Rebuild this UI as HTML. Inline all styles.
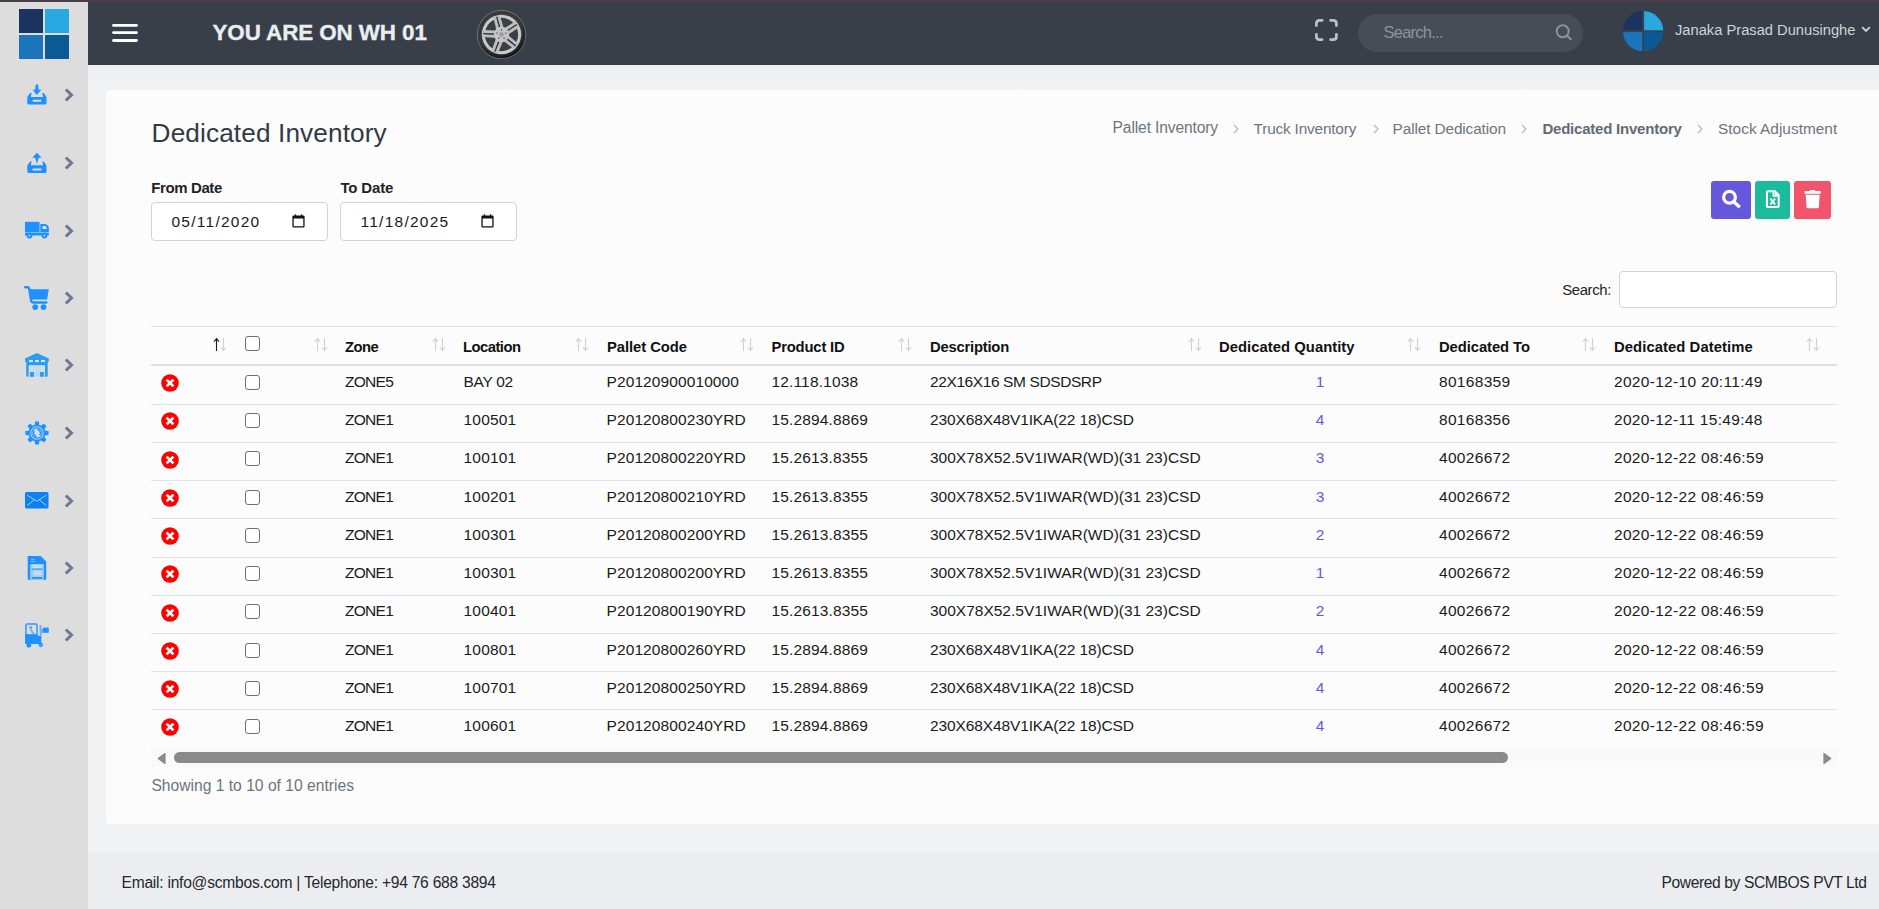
<!DOCTYPE html>
<html><head><meta charset="utf-8"><title>Dedicated Inventory</title>
<style>
html,body{margin:0;padding:0}
body{width:1879px;height:909px;overflow:hidden;position:relative;background:#f0f1f4;font-family:"Liberation Sans",sans-serif}
.a{position:absolute;box-sizing:border-box}
svg.a{overflow:visible}
.t{position:absolute;white-space:nowrap;line-height:1}
</style></head><body>
<div class="a" style="left:0;top:0;width:1879px;height:2px;background:#4b3e48"></div>
<div class="a" style="left:0;top:2px;width:88px;height:907px;background:#dddddd"></div>
<div class="a" style="left:88px;top:2px;width:1791px;height:63px;background:#383f49"></div>
<div class="a" style="left:88px;top:65px;width:1791px;height:787px;background:linear-gradient(#eeeff2,#f1f2f4 25px,#f1f2f4)"></div>
<div class="a" style="left:88px;top:852px;width:1791px;height:57px;background:#ecedf1"></div>
<div class="a" style="left:106px;top:90px;width:1790px;height:734px;background:#fcfcfd;border-radius:4px"></div>
<div class="a" style="left:19px;top:9px;width:24px;height:24px;background:#1b335f"></div>
<div class="a" style="left:45px;top:9px;width:24px;height:24px;background:#27a8e0"></div>
<div class="a" style="left:19px;top:35px;width:24px;height:24px;background:#1c75bc"></div>
<div class="a" style="left:45px;top:35px;width:24px;height:24px;background:#0b5a96"></div>
<svg class="a" style="left:63.5px;top:88px" width="10" height="14" viewBox="0 0 10 14"><path d="M1.8 1.5 L7.5 7 L1.8 12.5" fill="none" stroke="#6e7891" stroke-width="3.1"/></svg>
<svg class="a" style="left:63.5px;top:156px" width="10" height="14" viewBox="0 0 10 14"><path d="M1.8 1.5 L7.5 7 L1.8 12.5" fill="none" stroke="#6e7891" stroke-width="3.1"/></svg>
<svg class="a" style="left:63.5px;top:224px" width="10" height="14" viewBox="0 0 10 14"><path d="M1.8 1.5 L7.5 7 L1.8 12.5" fill="none" stroke="#6e7891" stroke-width="3.1"/></svg>
<svg class="a" style="left:63.5px;top:291px" width="10" height="14" viewBox="0 0 10 14"><path d="M1.8 1.5 L7.5 7 L1.8 12.5" fill="none" stroke="#6e7891" stroke-width="3.1"/></svg>
<svg class="a" style="left:63.5px;top:358px" width="10" height="14" viewBox="0 0 10 14"><path d="M1.8 1.5 L7.5 7 L1.8 12.5" fill="none" stroke="#6e7891" stroke-width="3.1"/></svg>
<svg class="a" style="left:63.5px;top:426px" width="10" height="14" viewBox="0 0 10 14"><path d="M1.8 1.5 L7.5 7 L1.8 12.5" fill="none" stroke="#6e7891" stroke-width="3.1"/></svg>
<svg class="a" style="left:63.5px;top:494px" width="10" height="14" viewBox="0 0 10 14"><path d="M1.8 1.5 L7.5 7 L1.8 12.5" fill="none" stroke="#6e7891" stroke-width="3.1"/></svg>
<svg class="a" style="left:63.5px;top:561px" width="10" height="14" viewBox="0 0 10 14"><path d="M1.8 1.5 L7.5 7 L1.8 12.5" fill="none" stroke="#6e7891" stroke-width="3.1"/></svg>
<svg class="a" style="left:63.5px;top:628px" width="10" height="14" viewBox="0 0 10 14"><path d="M1.8 1.5 L7.5 7 L1.8 12.5" fill="none" stroke="#6e7891" stroke-width="3.1"/></svg>
<svg class="a" style="left:27px;top:84px" width="20" height="21" viewBox="0 0 20 21"><path d="M9.9 0.2 Q10.9 0.2 11.1 1 L11.7 5.8 H14.3 L9.9 11 L5.5 5.8 H8.1 L8.7 1 Q8.9 0.2 9.9 0.2z" fill="#1e90ff"/><path d="M0.3 13 L3.1 9.1 H4.6 L3.8 12.9 H16.1 L15.3 9.1 H16.8 L19.5 13 V19 Q19.5 20.6 17.9 20.6 H1.9 Q0.3 20.6 0.3 19z M5.7 15.8 h8.5 v1.9 h-8.5z" fill="#1e90ff" fill-rule="evenodd"/></svg>
<svg class="a" style="left:27px;top:152px" width="20" height="21" viewBox="0 0 20 21"><path d="M9.9 0.8 L14.4 5.4 Q14.6 5.8 14.2 5.8 H11.7 L9.9 11.8 L8.1 5.8 H5.6 Q5.2 5.8 5.4 5.4z" fill="#1e90ff"/><path d="M0.3 13.4 L3.1 9.5 H4.6 L3.8 13.3 H16.1 L15.3 9.5 H16.8 L19.5 13.4 V19.4 Q19.5 21 17.9 21 H1.9 Q0.3 21 0.3 19.4z M5.5 16.6 h8.9 v1.9 h-8.9z" fill="#1e90ff" fill-rule="evenodd"/></svg>
<svg class="a" style="left:25px;top:221px" width="24" height="18" viewBox="0 0 24 18"><rect x="0" y="0.8" width="14.6" height="10.3" fill="#1e90ff"/><path d="M15.3 2.9 H20 Q22.6 2.9 23.8 6.6 V11.1 H15.3z" fill="#1e90ff"/><path d="M17.6 5 H20 Q21.3 5 21.8 7.9 H17.6z" fill="#e3e6ea"/><rect x="0" y="11.6" width="23.8" height="2.9" fill="#1e90ff"/><circle cx="4.5" cy="14.5" r="2.9" fill="#1e90ff"/><circle cx="19.4" cy="14.5" r="2.9" fill="#1e90ff"/><circle cx="4.5" cy="14.6" r="0.9" fill="#cfe3f7"/><circle cx="19.4" cy="14.6" r="0.9" fill="#cfe3f7"/></svg>
<svg class="a" style="left:25px;top:286px" width="24" height="24" viewBox="0 0 24 24"><path d="M0.2 1.3 H2.6 Q3.9 1.3 4.2 2.8 L6.2 14.6 Q6.5 16.5 8.3 16.5 H21.3" fill="none" stroke="#1e90ff" stroke-width="2.5" stroke-linecap="round"/><path d="M4.3 3.2 H23.8 L22.1 13.5 H6z" fill="#1e90ff"/><circle cx="10.2" cy="21.1" r="2.9" fill="#1e90ff"/><circle cx="18.5" cy="21.1" r="2.9" fill="#1e90ff"/></svg>
<svg class="a" style="left:25px;top:353px" width="24" height="24" viewBox="0 0 24 24"><path d="M11.9 0 L23.8 5.6 V8.6 L22.7 9.3 V23 Q22.7 23.8 21.8 23.8 H20 V12.3 H3.8 V23.8 H2.2 Q1.2 23.8 1.2 23 V9.3 L0 8.6 V5.6z" fill="#2a9cf2"/><rect x="4" y="7.1" width="3.9" height="1.9" fill="#e4ecf3"/><rect x="10" y="7.1" width="3.8" height="1.9" fill="#e4ecf3"/><rect x="16" y="7.1" width="3.9" height="1.9" fill="#e4ecf3"/><rect x="3.8" y="12.6" width="16.2" height="11.2" fill="#cfdff0"/><rect x="5" y="19" width="4" height="4.8" fill="#2a9cf2"/><rect x="14.9" y="19" width="4" height="4.8" fill="#2a9cf2"/><rect x="9.8" y="19" width="4.2" height="4.8" fill="#bcd6f0"/><rect x="7.8" y="14" width="7.6" height="4.4" fill="#c2d9f0"/></svg>
<svg class="a" style="left:25px;top:421px" width="24" height="24" viewBox="0 0 24 24"><path d="M9.7 5 L10.1 0.4 H13.9 L14.3 5z" fill="#1e90ff" transform="rotate(0 12 12)"/><path d="M9.7 5 L10.1 0.4 H13.9 L14.3 5z" fill="#1e90ff" transform="rotate(45 12 12)"/><path d="M9.7 5 L10.1 0.4 H13.9 L14.3 5z" fill="#1e90ff" transform="rotate(90 12 12)"/><path d="M9.7 5 L10.1 0.4 H13.9 L14.3 5z" fill="#1e90ff" transform="rotate(135 12 12)"/><path d="M9.7 5 L10.1 0.4 H13.9 L14.3 5z" fill="#1e90ff" transform="rotate(180 12 12)"/><path d="M9.7 5 L10.1 0.4 H13.9 L14.3 5z" fill="#1e90ff" transform="rotate(225 12 12)"/><path d="M9.7 5 L10.1 0.4 H13.9 L14.3 5z" fill="#1e90ff" transform="rotate(270 12 12)"/><path d="M9.7 5 L10.1 0.4 H13.9 L14.3 5z" fill="#1e90ff" transform="rotate(315 12 12)"/><circle cx="12" cy="12" r="8.6" fill="#1e90ff"/><circle cx="12" cy="12" r="6.3" fill="none" stroke="#a9d3fb" stroke-width="1.1"/><circle cx="12" cy="12" r="4.6" fill="#cfe0f0"/><path d="M13.6 8.9 A3.4 3.4 0 0 1 14.6 14.2 M10.4 15.1 A3.4 3.4 0 0 1 9.4 9.8" fill="none" stroke="#1e90ff" stroke-width="1.4"/><path d="M12.2 7.6 L14.6 8.2 L13.2 10.2z M11.8 16.4 L9.4 15.8 L10.8 13.8z" fill="#1e90ff"/></svg>
<svg class="a" style="left:25px;top:492px" width="24" height="17" viewBox="0 0 24 17"><rect x="0" y="0" width="23.5" height="16.5" rx="1.5" fill="#0d80f2"/><path d="M2.2 3.2 L11.8 9.2 L21.3 3.2 M2.2 13.5 L9 8 M21.3 13.5 L14.6 8" fill="none" stroke="#ffffff" stroke-width="0.7" opacity="0.9"/></svg>
<svg class="a" style="left:27px;top:556px" width="20" height="24" viewBox="0 0 20 24"><path d="M0.7 0 H13.8 L19.2 5.5 V23.8 H0.7z" fill="#1e90ff"/><rect x="3.2" y="8" width="13.6" height="15.8" rx="1.2" fill="#a3cef9"/><rect x="5.3" y="9.5" width="9.4" height="2.6" fill="#c6e1fb"/><rect x="4.6" y="12.6" width="11" height="1.1" fill="#1e90ff" opacity="0.85"/><rect x="6.4" y="14.6" width="8.2" height="4.6" fill="#c0dcf9"/><rect x="4.6" y="20.9" width="11.2" height="1.9" rx="0.9" fill="#1e90ff"/><rect x="4" y="3.2" width="3.6" height="0.9" fill="#8fc4fa"/><rect x="4" y="5" width="3.6" height="0.9" fill="#8fc4fa"/></svg>
<svg class="a" style="left:25px;top:623px" width="24" height="25" viewBox="0 0 24 25"><rect x="1" y="1" width="11" height="11.5" rx="1.8" fill="none" stroke="#1e90ff" stroke-width="2" opacity="0.7"/><circle cx="5.8" cy="4.6" r="1.3" fill="#1e90ff" opacity="0.8"/><path d="M4.6 6.2 H6.6 L10.4 11.4 H7.6z" fill="#1e90ff" opacity="0.55"/><path d="M0 11.3 H10.5 L16.3 13.8 V20.9 H0z" fill="#1e90ff"/><rect x="14.6" y="2" width="1.9" height="13" fill="#1e90ff" opacity="0.6"/><rect x="16.4" y="5.8" width="2" height="4.2" fill="#1e90ff" opacity="0.6"/><rect x="18" y="4.6" width="5.8" height="5.2" fill="#1e90ff"/><circle cx="3.8" cy="22.3" r="2.4" fill="#1e90ff"/><circle cx="15.8" cy="21.8" r="2.4" fill="#1e90ff" opacity="0.8"/></svg>
<svg class="a" style="left:112px;top:23px" width="27" height="20" viewBox="0 0 27 20"><rect x="0.1" y="1" width="25.8" height="2.8" rx="1.4" fill="#fff"/><rect x="0.1" y="8.2" width="25.8" height="2.8" rx="1.4" fill="#fff"/><rect x="0.1" y="16.1" width="25.8" height="2.8" rx="1.4" fill="#fff"/></svg>
<div class="t" style="left:212.5px;top:22.1px;font-size:22.4px;font-weight:bold;color:#ebedf0;letter-spacing:-0.082px;-webkit-text-stroke:0.35px #ebedf0">YOU ARE ON WH 01</div>
<svg class="a" style="left:477px;top:10px" width="49" height="49" viewBox="0 0 48 48"><defs><radialGradient id="tg" cx="0.45" cy="0.4" r="0.6"><stop offset="0.75" stop-color="#3a3a3a"/><stop offset="1" stop-color="#111"/></radialGradient></defs><circle cx="24" cy="24" r="23.7" fill="url(#tg)" stroke="#8e939b" stroke-width="0.6"/><circle cx="24" cy="24" r="19.3" fill="#c9c9c9"/><circle cx="24" cy="24" r="16.3" fill="#383f49"/><g transform="rotate(-15 24 24)"><path d="M20.2 24 L20.6 5.5 H27.4 L27.8 24z" fill="#bdbdbd"/><path d="M23.3 19 L23.4 6 H24.6 L24.7 19z" fill="#2b2f36"/></g><g transform="rotate(57 24 24)"><path d="M20.2 24 L20.6 5.5 H27.4 L27.8 24z" fill="#bdbdbd"/><path d="M23.3 19 L23.4 6 H24.6 L24.7 19z" fill="#2b2f36"/></g><g transform="rotate(129 24 24)"><path d="M20.2 24 L20.6 5.5 H27.4 L27.8 24z" fill="#bdbdbd"/><path d="M23.3 19 L23.4 6 H24.6 L24.7 19z" fill="#2b2f36"/></g><g transform="rotate(201 24 24)"><path d="M20.2 24 L20.6 5.5 H27.4 L27.8 24z" fill="#bdbdbd"/><path d="M23.3 19 L23.4 6 H24.6 L24.7 19z" fill="#2b2f36"/></g><g transform="rotate(273 24 24)"><path d="M20.2 24 L20.6 5.5 H27.4 L27.8 24z" fill="#bdbdbd"/><path d="M23.3 19 L23.4 6 H24.6 L24.7 19z" fill="#2b2f36"/></g><circle cx="24" cy="24" r="7.5" fill="#c4c4c4"/><circle cx="24" cy="24" r="2.2" fill="#9a9a9a"/><circle cx="24" cy="19.5" r="0.8" fill="#666"/><circle cx="28.3" cy="22.6" r="0.8" fill="#666"/><circle cx="26.6" cy="27.6" r="0.8" fill="#666"/><circle cx="21.4" cy="27.6" r="0.8" fill="#666"/><circle cx="19.7" cy="22.6" r="0.8" fill="#666"/></svg>
<svg class="a" style="left:1315px;top:19px" width="23" height="23" viewBox="0 0 23 23"><path d="M1.4 6.5 V4.5 Q1.4 1.4 4.5 1.4 H7.1 M15.6 1.4 H18.3 Q21.4 1.4 21.4 4.5 V6.5 M21.4 15.5 V17.5 Q21.4 20.6 18.3 20.6 H15.6 M7.1 20.6 H4.5 Q1.4 20.6 1.4 17.5 V15.5" fill="none" stroke="#bcbfc5" stroke-width="2.8" stroke-linecap="round"/></svg>
<div class="a" style="left:1358px;top:14px;width:225px;height:38px;border-radius:19px;background:#474d57"></div>
<div class="t" style="left:1383.5px;top:24.4px;font-size:16.5px;font-weight:normal;color:#8e939b;letter-spacing:-0.754px">Search...</div>
<svg class="a" style="left:1555px;top:24px" width="18" height="17" viewBox="0 0 18 17"><circle cx="7.7" cy="7.3" r="6" fill="none" stroke="#8c919a" stroke-width="2"/><path d="M12.2 11.8 L15.9 15.3" stroke="#8c919a" stroke-width="2" stroke-linecap="round"/></svg>
<svg class="a" style="left:1623px;top:10.7px" width="40.4" height="40.4" viewBox="0 0 40.4 40.4"><defs><clipPath id="cc"><circle cx="20.2" cy="20.2" r="20.2"/></clipPath></defs><g clip-path="url(#cc)"><rect x="0" y="0" width="20.2" height="20.2" fill="#1b335f"/><rect x="20.2" y="0" width="20.2" height="20.2" fill="#27a8e0"/><rect x="0" y="20.2" width="20.2" height="20.2" fill="#1c75bc"/><rect x="20.2" y="20.2" width="20.2" height="20.2" fill="#0b5a96"/><rect x="19.3" y="0" width="1.8" height="40.4" fill="#3c4149"/><rect x="0" y="19.3" width="40.4" height="1.8" fill="#3c4149"/></g></svg>
<div class="t" style="left:1675px;top:23.4px;font-size:14.7px;font-weight:normal;color:#d0d3d7;">Janaka Prasad Dunusinghe</div>
<svg class="a" style="left:1861px;top:26px" width="10" height="7" viewBox="0 0 10 7"><path d="M1.2 1.2 L5 5 L8.8 1.2" fill="none" stroke="#d0d3d7" stroke-width="1.9"/></svg>
<div class="t" style="left:151.6px;top:120.2px;font-size:26.2px;font-weight:normal;color:#323a46;letter-spacing:0.121px">Dedicated Inventory</div>
<div class="t" style="left:1112.6px;top:119.9px;font-size:15.6px;font-weight:normal;color:#6c757d;letter-spacing:-0.128px">Pallet Inventory</div>
<div class="t" style="left:1253.6px;top:120.9px;font-size:15.4px;font-weight:normal;color:#6c757d;letter-spacing:-0.197px">Truck Inventory</div>
<div class="t" style="left:1392.6px;top:120.9px;font-size:15.4px;font-weight:normal;color:#6c757d;letter-spacing:-0.129px">Pallet Dedication</div>
<div class="t" style="left:1542.4px;top:121.2px;font-size:15px;font-weight:bold;color:#626a73;letter-spacing:-0.215px">Dedicated Inventory</div>
<div class="t" style="left:1718px;top:120.9px;font-size:15.4px;font-weight:normal;color:#6c757d;letter-spacing:0.021px">Stock Adjustment</div>
<svg class="a" style="left:1232.3px;top:122.6px" width="8" height="12" viewBox="0 0 8 12"><path d="M2 2 L6 6 L2 10" fill="none" stroke="#b3b9bf" stroke-width="1.2"/></svg>
<svg class="a" style="left:1371.8px;top:122.6px" width="8" height="12" viewBox="0 0 8 12"><path d="M2 2 L6 6 L2 10" fill="none" stroke="#b3b9bf" stroke-width="1.2"/></svg>
<svg class="a" style="left:1520.3px;top:122.6px" width="8" height="12" viewBox="0 0 8 12"><path d="M2 2 L6 6 L2 10" fill="none" stroke="#b3b9bf" stroke-width="1.2"/></svg>
<svg class="a" style="left:1696.2px;top:122.6px" width="8" height="12" viewBox="0 0 8 12"><path d="M2 2 L6 6 L2 10" fill="none" stroke="#b3b9bf" stroke-width="1.2"/></svg>
<div class="t" style="left:151.3px;top:180.4px;font-size:15px;font-weight:bold;color:#1f2327;letter-spacing:-0.397px">From Date</div>
<div class="t" style="left:340.4px;top:180.4px;font-size:15px;font-weight:bold;color:#1f2327;letter-spacing:-0.149px">To Date</div>
<div class="a" style="left:151px;top:202px;width:177px;height:39px;border:1px solid #cfd4da;border-radius:4px;background:#ffffff"></div>
<div class="t" style="left:171.5px;top:214.1px;font-size:15.5px;font-weight:normal;color:#1a1a1a;letter-spacing:1.253px">05/11/2020</div>
<svg class="a" style="left:292px;top:213px" width="13" height="15" viewBox="0 0 13 15"><path d="M0.4 3.6 Q0.4 2.4 1.6 2.4 H11.4 Q12.6 2.4 12.6 3.6 V13.3 Q12.6 14.5 11.4 14.5 H1.6 Q0.4 14.5 0.4 13.3z M1.7 5.6 V13.2 H11.3 V5.6z" fill="#111" fill-rule="evenodd"/><rect x="2.6" y="1.2" width="1.6" height="1.6" rx="0.5" fill="#111"/><rect x="8.8" y="1.2" width="1.6" height="1.6" rx="0.5" fill="#111"/></svg>
<div class="a" style="left:340px;top:202px;width:177px;height:39px;border:1px solid #cfd4da;border-radius:4px;background:#ffffff"></div>
<div class="t" style="left:360.5px;top:214.1px;font-size:15.5px;font-weight:normal;color:#1a1a1a;letter-spacing:1.253px">11/18/2025</div>
<svg class="a" style="left:481px;top:213px" width="13" height="15" viewBox="0 0 13 15"><path d="M0.4 3.6 Q0.4 2.4 1.6 2.4 H11.4 Q12.6 2.4 12.6 3.6 V13.3 Q12.6 14.5 11.4 14.5 H1.6 Q0.4 14.5 0.4 13.3z M1.7 5.6 V13.2 H11.3 V5.6z" fill="#111" fill-rule="evenodd"/><rect x="2.6" y="1.2" width="1.6" height="1.6" rx="0.5" fill="#111"/><rect x="8.8" y="1.2" width="1.6" height="1.6" rx="0.5" fill="#111"/></svg>
<div class="a" style="left:1711px;top:181px;width:40px;height:38px;border-radius:3px;background:#6658dd"></div>
<div class="a" style="left:1755px;top:181px;width:35px;height:38px;border-radius:3px;background:#1abc9c"></div>
<div class="a" style="left:1794px;top:181px;width:37px;height:38px;border-radius:3px;background:#f1556c"></div>
<svg class="a" style="left:1721px;top:189px" width="21" height="21" viewBox="0 0 21 21"><circle cx="8.5" cy="8.3" r="5.9" fill="none" stroke="#fff" stroke-width="3.2"/><path d="M12.8 12.8 L18.8 18.3" stroke="#fff" stroke-width="3.4"/></svg>
<svg class="a" style="left:1765px;top:189px" width="16" height="20" viewBox="0 0 16 20"><path d="M2.9 2.2 H9.9 L13.7 6 V17 Q13.7 18 12.7 18 H2.9 Q1.9 18 1.9 17 V3.2 Q1.9 2.2 2.9 2.2z" fill="none" stroke="#fff" stroke-width="2" stroke-linejoin="round"/><path d="M8.4 2.2 V7 H13.7" fill="none" stroke="#fff" stroke-width="1.6"/><path d="M9.6 2.6 L13.3 6.3 H9.6z" fill="#fff"/><path d="M5.4 9.6 L10.1 15.5 M10.1 9.6 L5.4 15.5" stroke="#fff" stroke-width="2"/></svg>
<svg class="a" style="left:1804px;top:189px" width="18" height="20" viewBox="0 0 18 20"><rect x="0.5" y="2" width="16.3" height="2.8" rx="0.6" fill="#fff"/><path d="M5.6 2.2 Q5.9 1 7 1 H10 Q11.1 1 11.4 2.2z" fill="#fff"/><path d="M1.7 5.8 H15.7 L14.8 18.6 Q14.7 19.2 14 19.2 H3.4 Q2.7 19.2 2.6 18.6z" fill="#fff"/></svg>
<div class="t" style="left:1562.3px;top:282.6px;font-size:14.9px;font-weight:normal;color:#1f2327;letter-spacing:-0.392px">Search:</div>
<div class="a" style="left:1619px;top:271px;width:218px;height:37px;border:1px solid #cfd4da;border-radius:4px;background:#ffffff"></div>
<div class="a" style="left:151px;top:326px;width:1686px;height:1px;background:#dee2e6"></div>
<div class="a" style="left:151px;top:364px;width:1686px;height:2px;background:#dcdfe3"></div>
<div class="a" style="left:151px;top:403.54px;width:1686px;height:1px;background:#dee2e6"></div>
<div class="a" style="left:151px;top:441.78px;width:1686px;height:1px;background:#dee2e6"></div>
<div class="a" style="left:151px;top:480.02px;width:1686px;height:1px;background:#dee2e6"></div>
<div class="a" style="left:151px;top:518.26px;width:1686px;height:1px;background:#dee2e6"></div>
<div class="a" style="left:151px;top:556.50px;width:1686px;height:1px;background:#dee2e6"></div>
<div class="a" style="left:151px;top:594.74px;width:1686px;height:1px;background:#dee2e6"></div>
<div class="a" style="left:151px;top:632.98px;width:1686px;height:1px;background:#dee2e6"></div>
<div class="a" style="left:151px;top:671.22px;width:1686px;height:1px;background:#dee2e6"></div>
<div class="a" style="left:151px;top:709.46px;width:1686px;height:1px;background:#dee2e6"></div>
<svg class="a" style="left:213px;top:337px" width="14" height="15" viewBox="0 0 14 15"><path d="M3.5 14 V1.8 M1 4.6 L3.5 1.6 L6 4.6" fill="none" stroke="#1a1a1a" stroke-width="1.1"/><path d="M10.5 1 V13.2 M8 10.4 L10.5 13.4 L13 10.4" fill="none" stroke="#d0d1d3" stroke-width="1.1"/></svg>
<svg class="a" style="left:314px;top:337px" width="14" height="15" viewBox="0 0 14 15"><path d="M3.5 14 V1.8 M1 4.6 L3.5 1.6 L6 4.6" fill="none" stroke="#d0d1d3" stroke-width="1.1"/><path d="M10.5 1 V13.2 M8 10.4 L10.5 13.4 L13 10.4" fill="none" stroke="#d0d1d3" stroke-width="1.1"/></svg>
<svg class="a" style="left:432px;top:337px" width="14" height="15" viewBox="0 0 14 15"><path d="M3.5 14 V1.8 M1 4.6 L3.5 1.6 L6 4.6" fill="none" stroke="#d0d1d3" stroke-width="1.1"/><path d="M10.5 1 V13.2 M8 10.4 L10.5 13.4 L13 10.4" fill="none" stroke="#d0d1d3" stroke-width="1.1"/></svg>
<svg class="a" style="left:575px;top:337px" width="14" height="15" viewBox="0 0 14 15"><path d="M3.5 14 V1.8 M1 4.6 L3.5 1.6 L6 4.6" fill="none" stroke="#d0d1d3" stroke-width="1.1"/><path d="M10.5 1 V13.2 M8 10.4 L10.5 13.4 L13 10.4" fill="none" stroke="#d0d1d3" stroke-width="1.1"/></svg>
<svg class="a" style="left:740px;top:337px" width="14" height="15" viewBox="0 0 14 15"><path d="M3.5 14 V1.8 M1 4.6 L3.5 1.6 L6 4.6" fill="none" stroke="#d0d1d3" stroke-width="1.1"/><path d="M10.5 1 V13.2 M8 10.4 L10.5 13.4 L13 10.4" fill="none" stroke="#d0d1d3" stroke-width="1.1"/></svg>
<svg class="a" style="left:898px;top:337px" width="14" height="15" viewBox="0 0 14 15"><path d="M3.5 14 V1.8 M1 4.6 L3.5 1.6 L6 4.6" fill="none" stroke="#d0d1d3" stroke-width="1.1"/><path d="M10.5 1 V13.2 M8 10.4 L10.5 13.4 L13 10.4" fill="none" stroke="#d0d1d3" stroke-width="1.1"/></svg>
<svg class="a" style="left:1188px;top:337px" width="14" height="15" viewBox="0 0 14 15"><path d="M3.5 14 V1.8 M1 4.6 L3.5 1.6 L6 4.6" fill="none" stroke="#d0d1d3" stroke-width="1.1"/><path d="M10.5 1 V13.2 M8 10.4 L10.5 13.4 L13 10.4" fill="none" stroke="#d0d1d3" stroke-width="1.1"/></svg>
<svg class="a" style="left:1407px;top:337px" width="14" height="15" viewBox="0 0 14 15"><path d="M3.5 14 V1.8 M1 4.6 L3.5 1.6 L6 4.6" fill="none" stroke="#d0d1d3" stroke-width="1.1"/><path d="M10.5 1 V13.2 M8 10.4 L10.5 13.4 L13 10.4" fill="none" stroke="#d0d1d3" stroke-width="1.1"/></svg>
<svg class="a" style="left:1582px;top:337px" width="14" height="15" viewBox="0 0 14 15"><path d="M3.5 14 V1.8 M1 4.6 L3.5 1.6 L6 4.6" fill="none" stroke="#d0d1d3" stroke-width="1.1"/><path d="M10.5 1 V13.2 M8 10.4 L10.5 13.4 L13 10.4" fill="none" stroke="#d0d1d3" stroke-width="1.1"/></svg>
<svg class="a" style="left:1806px;top:337px" width="14" height="15" viewBox="0 0 14 15"><path d="M3.5 14 V1.8 M1 4.6 L3.5 1.6 L6 4.6" fill="none" stroke="#d0d1d3" stroke-width="1.1"/><path d="M10.5 1 V13.2 M8 10.4 L10.5 13.4 L13 10.4" fill="none" stroke="#d0d1d3" stroke-width="1.1"/></svg>
<div class="t" style="left:345px;top:340.1px;font-size:14.8px;font-weight:bold;color:#111111;letter-spacing:-0.518px">Zone</div>
<div class="t" style="left:463px;top:340.1px;font-size:14.8px;font-weight:bold;color:#111111;letter-spacing:-0.524px">Location</div>
<div class="t" style="left:607px;top:340.1px;font-size:14.8px;font-weight:bold;color:#111111;letter-spacing:-0.060px">Pallet Code</div>
<div class="t" style="left:771.5px;top:340.1px;font-size:14.8px;font-weight:bold;color:#111111;letter-spacing:-0.181px">Product ID</div>
<div class="t" style="left:930px;top:340.1px;font-size:14.8px;font-weight:bold;color:#111111;letter-spacing:-0.222px">Description</div>
<div class="t" style="left:1219px;top:340.1px;font-size:14.8px;font-weight:bold;color:#111111;letter-spacing:0.043px">Dedicated Quantity</div>
<div class="t" style="left:1439px;top:340.1px;font-size:14.8px;font-weight:bold;color:#111111;letter-spacing:-0.075px">Dedicated To</div>
<div class="t" style="left:1614px;top:340.1px;font-size:14.8px;font-weight:bold;color:#111111;letter-spacing:0.079px">Dedicated Datetime</div>
<div class="a" style="left:245px;top:336px;width:15px;height:15px;border:1.3px solid #707070;border-radius:3px;background:#fff"></div>
<svg class="a" style="left:160.8px;top:374.1px" width="18" height="18" viewBox="0 0 18 18"><circle cx="9" cy="9" r="8.8" fill="#ff0000"/><path d="M5.6 5.6 L12.4 12.4 M12.4 5.6 L5.6 12.4" stroke="#fff" stroke-width="2.7"/></svg>
<div class="a" style="left:245px;top:375.00px;width:15px;height:15px;border:1.3px solid #707070;border-radius:3px;background:#fff"></div>
<div class="t" style="left:345px;top:373.8px;font-size:15.5px;font-weight:normal;color:#1a1a1a;letter-spacing:-0.7px">ZONE5</div>
<div class="t" style="left:463.5px;top:373.8px;font-size:15.5px;font-weight:normal;color:#1a1a1a;letter-spacing:-0.3px">BAY 02</div>
<div class="t" style="left:606.5px;top:373.8px;font-size:15.5px;font-weight:normal;color:#1a1a1a;letter-spacing:0.1px">P20120900010000</div>
<div class="t" style="left:771.5px;top:373.8px;font-size:15.5px;font-weight:normal;color:#1a1a1a;letter-spacing:0.15px">12.118.1038</div>
<div class="t" style="left:930px;top:373.8px;font-size:15.5px;font-weight:normal;color:#1a1a1a;letter-spacing:-0.400px">22X16X16 SM SDSDSRP</div>
<div class="t" style="left:1020.0px;width:600px;text-align:center;top:373.8px;font-size:15.5px;font-weight:normal;color:#6658dd;">1</div>
<div class="t" style="left:1439px;top:373.8px;font-size:15.5px;font-weight:normal;color:#1a1a1a;letter-spacing:0.31px">80168359</div>
<div class="t" style="left:1614px;top:373.8px;font-size:15.5px;font-weight:normal;color:#1a1a1a;letter-spacing:0.31px">2020-12-10 20:11:49</div>
<svg class="a" style="left:160.8px;top:412.34px" width="18" height="18" viewBox="0 0 18 18"><circle cx="9" cy="9" r="8.8" fill="#ff0000"/><path d="M5.6 5.6 L12.4 12.4 M12.4 5.6 L5.6 12.4" stroke="#fff" stroke-width="2.7"/></svg>
<div class="a" style="left:245px;top:413.24px;width:15px;height:15px;border:1.3px solid #707070;border-radius:3px;background:#fff"></div>
<div class="t" style="left:345px;top:412.0px;font-size:15.5px;font-weight:normal;color:#1a1a1a;letter-spacing:-0.7px">ZONE1</div>
<div class="t" style="left:463.5px;top:412.0px;font-size:15.5px;font-weight:normal;color:#1a1a1a;letter-spacing:0.2px">100501</div>
<div class="t" style="left:606.5px;top:412.0px;font-size:15.5px;font-weight:normal;color:#1a1a1a;letter-spacing:0.1px">P20120800230YRD</div>
<div class="t" style="left:771.5px;top:412.0px;font-size:15.5px;font-weight:normal;color:#1a1a1a;letter-spacing:0.15px">15.2894.8869</div>
<div class="t" style="left:930px;top:412.0px;font-size:15.5px;font-weight:normal;color:#1a1a1a;letter-spacing:-0.122px">230X68X48V1IKA(22 18)CSD</div>
<div class="t" style="left:1020.0px;width:600px;text-align:center;top:412.0px;font-size:15.5px;font-weight:normal;color:#6658dd;">4</div>
<div class="t" style="left:1439px;top:412.0px;font-size:15.5px;font-weight:normal;color:#1a1a1a;letter-spacing:0.31px">80168356</div>
<div class="t" style="left:1614px;top:412.0px;font-size:15.5px;font-weight:normal;color:#1a1a1a;letter-spacing:0.31px">2020-12-11 15:49:48</div>
<svg class="a" style="left:160.8px;top:450.58px" width="18" height="18" viewBox="0 0 18 18"><circle cx="9" cy="9" r="8.8" fill="#ff0000"/><path d="M5.6 5.6 L12.4 12.4 M12.4 5.6 L5.6 12.4" stroke="#fff" stroke-width="2.7"/></svg>
<div class="a" style="left:245px;top:451.48px;width:15px;height:15px;border:1.3px solid #707070;border-radius:3px;background:#fff"></div>
<div class="t" style="left:345px;top:450.3px;font-size:15.5px;font-weight:normal;color:#1a1a1a;letter-spacing:-0.7px">ZONE1</div>
<div class="t" style="left:463.5px;top:450.3px;font-size:15.5px;font-weight:normal;color:#1a1a1a;letter-spacing:0.2px">100101</div>
<div class="t" style="left:606.5px;top:450.3px;font-size:15.5px;font-weight:normal;color:#1a1a1a;letter-spacing:0.1px">P20120800220YRD</div>
<div class="t" style="left:771.5px;top:450.3px;font-size:15.5px;font-weight:normal;color:#1a1a1a;letter-spacing:0.15px">15.2613.8355</div>
<div class="t" style="left:930px;top:450.3px;font-size:15.5px;font-weight:normal;color:#1a1a1a;letter-spacing:-0.006px">300X78X52.5V1IWAR(WD)(31 23)CSD</div>
<div class="t" style="left:1020.0px;width:600px;text-align:center;top:450.3px;font-size:15.5px;font-weight:normal;color:#6658dd;">3</div>
<div class="t" style="left:1439px;top:450.3px;font-size:15.5px;font-weight:normal;color:#1a1a1a;letter-spacing:0.31px">40026672</div>
<div class="t" style="left:1614px;top:450.3px;font-size:15.5px;font-weight:normal;color:#1a1a1a;letter-spacing:0.31px">2020-12-22 08:46:59</div>
<svg class="a" style="left:160.8px;top:488.82px" width="18" height="18" viewBox="0 0 18 18"><circle cx="9" cy="9" r="8.8" fill="#ff0000"/><path d="M5.6 5.6 L12.4 12.4 M12.4 5.6 L5.6 12.4" stroke="#fff" stroke-width="2.7"/></svg>
<div class="a" style="left:245px;top:489.72px;width:15px;height:15px;border:1.3px solid #707070;border-radius:3px;background:#fff"></div>
<div class="t" style="left:345px;top:488.5px;font-size:15.5px;font-weight:normal;color:#1a1a1a;letter-spacing:-0.7px">ZONE1</div>
<div class="t" style="left:463.5px;top:488.5px;font-size:15.5px;font-weight:normal;color:#1a1a1a;letter-spacing:0.2px">100201</div>
<div class="t" style="left:606.5px;top:488.5px;font-size:15.5px;font-weight:normal;color:#1a1a1a;letter-spacing:0.1px">P20120800210YRD</div>
<div class="t" style="left:771.5px;top:488.5px;font-size:15.5px;font-weight:normal;color:#1a1a1a;letter-spacing:0.15px">15.2613.8355</div>
<div class="t" style="left:930px;top:488.5px;font-size:15.5px;font-weight:normal;color:#1a1a1a;letter-spacing:-0.006px">300X78X52.5V1IWAR(WD)(31 23)CSD</div>
<div class="t" style="left:1020.0px;width:600px;text-align:center;top:488.5px;font-size:15.5px;font-weight:normal;color:#6658dd;">3</div>
<div class="t" style="left:1439px;top:488.5px;font-size:15.5px;font-weight:normal;color:#1a1a1a;letter-spacing:0.31px">40026672</div>
<div class="t" style="left:1614px;top:488.5px;font-size:15.5px;font-weight:normal;color:#1a1a1a;letter-spacing:0.31px">2020-12-22 08:46:59</div>
<svg class="a" style="left:160.8px;top:527.06px" width="18" height="18" viewBox="0 0 18 18"><circle cx="9" cy="9" r="8.8" fill="#ff0000"/><path d="M5.6 5.6 L12.4 12.4 M12.4 5.6 L5.6 12.4" stroke="#fff" stroke-width="2.7"/></svg>
<div class="a" style="left:245px;top:527.96px;width:15px;height:15px;border:1.3px solid #707070;border-radius:3px;background:#fff"></div>
<div class="t" style="left:345px;top:526.7px;font-size:15.5px;font-weight:normal;color:#1a1a1a;letter-spacing:-0.7px">ZONE1</div>
<div class="t" style="left:463.5px;top:526.7px;font-size:15.5px;font-weight:normal;color:#1a1a1a;letter-spacing:0.2px">100301</div>
<div class="t" style="left:606.5px;top:526.7px;font-size:15.5px;font-weight:normal;color:#1a1a1a;letter-spacing:0.1px">P20120800200YRD</div>
<div class="t" style="left:771.5px;top:526.7px;font-size:15.5px;font-weight:normal;color:#1a1a1a;letter-spacing:0.15px">15.2613.8355</div>
<div class="t" style="left:930px;top:526.7px;font-size:15.5px;font-weight:normal;color:#1a1a1a;letter-spacing:-0.006px">300X78X52.5V1IWAR(WD)(31 23)CSD</div>
<div class="t" style="left:1020.0px;width:600px;text-align:center;top:526.7px;font-size:15.5px;font-weight:normal;color:#6658dd;">2</div>
<div class="t" style="left:1439px;top:526.7px;font-size:15.5px;font-weight:normal;color:#1a1a1a;letter-spacing:0.31px">40026672</div>
<div class="t" style="left:1614px;top:526.7px;font-size:15.5px;font-weight:normal;color:#1a1a1a;letter-spacing:0.31px">2020-12-22 08:46:59</div>
<svg class="a" style="left:160.8px;top:565.3px" width="18" height="18" viewBox="0 0 18 18"><circle cx="9" cy="9" r="8.8" fill="#ff0000"/><path d="M5.6 5.6 L12.4 12.4 M12.4 5.6 L5.6 12.4" stroke="#fff" stroke-width="2.7"/></svg>
<div class="a" style="left:245px;top:566.20px;width:15px;height:15px;border:1.3px solid #707070;border-radius:3px;background:#fff"></div>
<div class="t" style="left:345px;top:565.0px;font-size:15.5px;font-weight:normal;color:#1a1a1a;letter-spacing:-0.7px">ZONE1</div>
<div class="t" style="left:463.5px;top:565.0px;font-size:15.5px;font-weight:normal;color:#1a1a1a;letter-spacing:0.2px">100301</div>
<div class="t" style="left:606.5px;top:565.0px;font-size:15.5px;font-weight:normal;color:#1a1a1a;letter-spacing:0.1px">P20120800200YRD</div>
<div class="t" style="left:771.5px;top:565.0px;font-size:15.5px;font-weight:normal;color:#1a1a1a;letter-spacing:0.15px">15.2613.8355</div>
<div class="t" style="left:930px;top:565.0px;font-size:15.5px;font-weight:normal;color:#1a1a1a;letter-spacing:-0.006px">300X78X52.5V1IWAR(WD)(31 23)CSD</div>
<div class="t" style="left:1020.0px;width:600px;text-align:center;top:565.0px;font-size:15.5px;font-weight:normal;color:#6658dd;">1</div>
<div class="t" style="left:1439px;top:565.0px;font-size:15.5px;font-weight:normal;color:#1a1a1a;letter-spacing:0.31px">40026672</div>
<div class="t" style="left:1614px;top:565.0px;font-size:15.5px;font-weight:normal;color:#1a1a1a;letter-spacing:0.31px">2020-12-22 08:46:59</div>
<svg class="a" style="left:160.8px;top:603.54px" width="18" height="18" viewBox="0 0 18 18"><circle cx="9" cy="9" r="8.8" fill="#ff0000"/><path d="M5.6 5.6 L12.4 12.4 M12.4 5.6 L5.6 12.4" stroke="#fff" stroke-width="2.7"/></svg>
<div class="a" style="left:245px;top:604.44px;width:15px;height:15px;border:1.3px solid #707070;border-radius:3px;background:#fff"></div>
<div class="t" style="left:345px;top:603.2px;font-size:15.5px;font-weight:normal;color:#1a1a1a;letter-spacing:-0.7px">ZONE1</div>
<div class="t" style="left:463.5px;top:603.2px;font-size:15.5px;font-weight:normal;color:#1a1a1a;letter-spacing:0.2px">100401</div>
<div class="t" style="left:606.5px;top:603.2px;font-size:15.5px;font-weight:normal;color:#1a1a1a;letter-spacing:0.1px">P20120800190YRD</div>
<div class="t" style="left:771.5px;top:603.2px;font-size:15.5px;font-weight:normal;color:#1a1a1a;letter-spacing:0.15px">15.2613.8355</div>
<div class="t" style="left:930px;top:603.2px;font-size:15.5px;font-weight:normal;color:#1a1a1a;letter-spacing:-0.006px">300X78X52.5V1IWAR(WD)(31 23)CSD</div>
<div class="t" style="left:1020.0px;width:600px;text-align:center;top:603.2px;font-size:15.5px;font-weight:normal;color:#6658dd;">2</div>
<div class="t" style="left:1439px;top:603.2px;font-size:15.5px;font-weight:normal;color:#1a1a1a;letter-spacing:0.31px">40026672</div>
<div class="t" style="left:1614px;top:603.2px;font-size:15.5px;font-weight:normal;color:#1a1a1a;letter-spacing:0.31px">2020-12-22 08:46:59</div>
<svg class="a" style="left:160.8px;top:641.78px" width="18" height="18" viewBox="0 0 18 18"><circle cx="9" cy="9" r="8.8" fill="#ff0000"/><path d="M5.6 5.6 L12.4 12.4 M12.4 5.6 L5.6 12.4" stroke="#fff" stroke-width="2.7"/></svg>
<div class="a" style="left:245px;top:642.68px;width:15px;height:15px;border:1.3px solid #707070;border-radius:3px;background:#fff"></div>
<div class="t" style="left:345px;top:641.5px;font-size:15.5px;font-weight:normal;color:#1a1a1a;letter-spacing:-0.7px">ZONE1</div>
<div class="t" style="left:463.5px;top:641.5px;font-size:15.5px;font-weight:normal;color:#1a1a1a;letter-spacing:0.2px">100801</div>
<div class="t" style="left:606.5px;top:641.5px;font-size:15.5px;font-weight:normal;color:#1a1a1a;letter-spacing:0.1px">P20120800260YRD</div>
<div class="t" style="left:771.5px;top:641.5px;font-size:15.5px;font-weight:normal;color:#1a1a1a;letter-spacing:0.15px">15.2894.8869</div>
<div class="t" style="left:930px;top:641.5px;font-size:15.5px;font-weight:normal;color:#1a1a1a;letter-spacing:-0.122px">230X68X48V1IKA(22 18)CSD</div>
<div class="t" style="left:1020.0px;width:600px;text-align:center;top:641.5px;font-size:15.5px;font-weight:normal;color:#6658dd;">4</div>
<div class="t" style="left:1439px;top:641.5px;font-size:15.5px;font-weight:normal;color:#1a1a1a;letter-spacing:0.31px">40026672</div>
<div class="t" style="left:1614px;top:641.5px;font-size:15.5px;font-weight:normal;color:#1a1a1a;letter-spacing:0.31px">2020-12-22 08:46:59</div>
<svg class="a" style="left:160.8px;top:680.02px" width="18" height="18" viewBox="0 0 18 18"><circle cx="9" cy="9" r="8.8" fill="#ff0000"/><path d="M5.6 5.6 L12.4 12.4 M12.4 5.6 L5.6 12.4" stroke="#fff" stroke-width="2.7"/></svg>
<div class="a" style="left:245px;top:680.92px;width:15px;height:15px;border:1.3px solid #707070;border-radius:3px;background:#fff"></div>
<div class="t" style="left:345px;top:679.7px;font-size:15.5px;font-weight:normal;color:#1a1a1a;letter-spacing:-0.7px">ZONE1</div>
<div class="t" style="left:463.5px;top:679.7px;font-size:15.5px;font-weight:normal;color:#1a1a1a;letter-spacing:0.2px">100701</div>
<div class="t" style="left:606.5px;top:679.7px;font-size:15.5px;font-weight:normal;color:#1a1a1a;letter-spacing:0.1px">P20120800250YRD</div>
<div class="t" style="left:771.5px;top:679.7px;font-size:15.5px;font-weight:normal;color:#1a1a1a;letter-spacing:0.15px">15.2894.8869</div>
<div class="t" style="left:930px;top:679.7px;font-size:15.5px;font-weight:normal;color:#1a1a1a;letter-spacing:-0.122px">230X68X48V1IKA(22 18)CSD</div>
<div class="t" style="left:1020.0px;width:600px;text-align:center;top:679.7px;font-size:15.5px;font-weight:normal;color:#6658dd;">4</div>
<div class="t" style="left:1439px;top:679.7px;font-size:15.5px;font-weight:normal;color:#1a1a1a;letter-spacing:0.31px">40026672</div>
<div class="t" style="left:1614px;top:679.7px;font-size:15.5px;font-weight:normal;color:#1a1a1a;letter-spacing:0.31px">2020-12-22 08:46:59</div>
<svg class="a" style="left:160.8px;top:718.26px" width="18" height="18" viewBox="0 0 18 18"><circle cx="9" cy="9" r="8.8" fill="#ff0000"/><path d="M5.6 5.6 L12.4 12.4 M12.4 5.6 L5.6 12.4" stroke="#fff" stroke-width="2.7"/></svg>
<div class="a" style="left:245px;top:719.16px;width:15px;height:15px;border:1.3px solid #707070;border-radius:3px;background:#fff"></div>
<div class="t" style="left:345px;top:717.9px;font-size:15.5px;font-weight:normal;color:#1a1a1a;letter-spacing:-0.7px">ZONE1</div>
<div class="t" style="left:463.5px;top:717.9px;font-size:15.5px;font-weight:normal;color:#1a1a1a;letter-spacing:0.2px">100601</div>
<div class="t" style="left:606.5px;top:717.9px;font-size:15.5px;font-weight:normal;color:#1a1a1a;letter-spacing:0.1px">P20120800240YRD</div>
<div class="t" style="left:771.5px;top:717.9px;font-size:15.5px;font-weight:normal;color:#1a1a1a;letter-spacing:0.15px">15.2894.8869</div>
<div class="t" style="left:930px;top:717.9px;font-size:15.5px;font-weight:normal;color:#1a1a1a;letter-spacing:-0.122px">230X68X48V1IKA(22 18)CSD</div>
<div class="t" style="left:1020.0px;width:600px;text-align:center;top:717.9px;font-size:15.5px;font-weight:normal;color:#6658dd;">4</div>
<div class="t" style="left:1439px;top:717.9px;font-size:15.5px;font-weight:normal;color:#1a1a1a;letter-spacing:0.31px">40026672</div>
<div class="t" style="left:1614px;top:717.9px;font-size:15.5px;font-weight:normal;color:#1a1a1a;letter-spacing:0.31px">2020-12-22 08:46:59</div>
<div class="a" style="left:151px;top:748px;width:1686px;height:19px;background:#f9f9fa"></div>
<svg class="a" style="left:157px;top:751.5px" width="10" height="13" viewBox="0 0 10 13"><path d="M8.6 1.6 Q8.6 0.4 7.6 1.1 L1.2 5.7 Q0.2 6.5 1.2 7.3 L7.6 11.9 Q8.6 12.6 8.6 11.4z" fill="#8a8a8a"/></svg>
<svg class="a" style="left:1822px;top:751.5px" width="10" height="13" viewBox="0 0 10 13"><path d="M1.4 1.6 Q1.4 0.4 2.4 1.1 L8.8 5.7 Q9.8 6.5 8.8 7.3 L2.4 11.9 Q1.4 12.6 1.4 11.4z" fill="#8a8a8a"/></svg>
<div class="a" style="left:174px;top:752px;width:1334px;height:11px;border-radius:5.5px;background:#8a8a8a"></div>
<div class="t" style="left:151.4px;top:777.7px;font-size:15.65px;font-weight:normal;color:#6c757d;">Showing 1 to 10 of 10 entries</div>
<div class="t" style="left:121.5px;top:875.2px;font-size:15.6px;font-weight:normal;color:#24282c;letter-spacing:-0.245px">Email: info@scmbos.com | Telephone: +94 76 688 3894</div>
<div class="t" style="right:12.5px;top:875.2px;font-size:15.6px;font-weight:normal;color:#24282c;letter-spacing:-0.385px">Powered by SCMBOS PVT Ltd</div>
</body></html>
